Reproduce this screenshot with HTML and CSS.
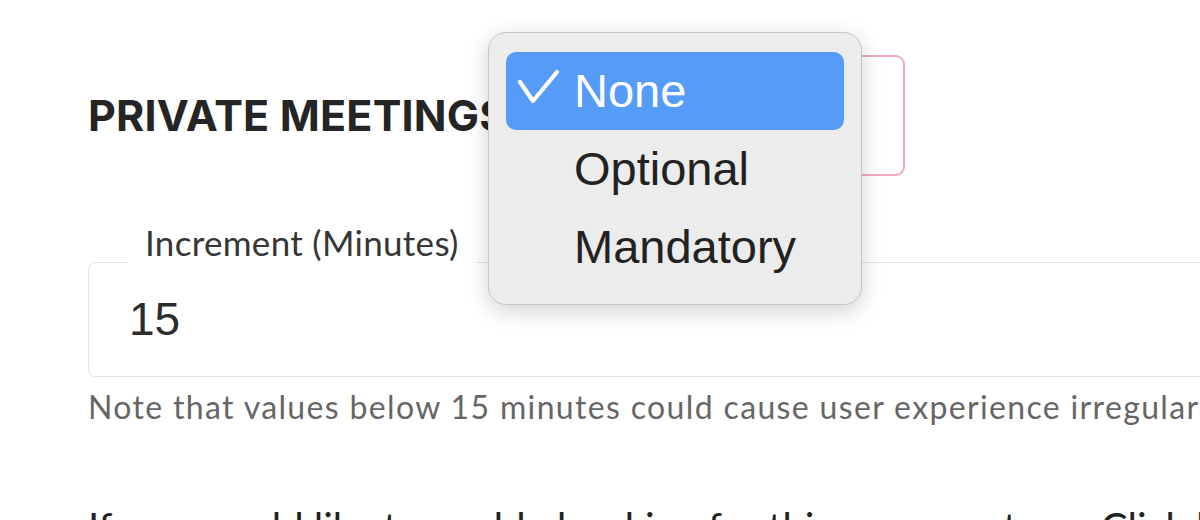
FILE: index.html
```html
<!DOCTYPE html>
<html lang="en">
<head>
<meta charset="utf-8">
<title>Private Meetings</title>
<link rel="stylesheet" href="styles.css">
</head>
<body>
<main class="page">
  <div class="head">
    <h2 class="heading">PRIVATE MEETINGS</h2>
    <div class="select-box"></div>
  </div>

  <div class="field">
    <div class="field-label">Increment (Minutes)</div>
    <div class="field-value">15</div>
  </div>
  <p class="note">Note that values below 15 minutes could cause user experience irregularities.</p>

  <p class="lead">If you would like to enable booking for this resource type, Click here to continue</p>

  <ul class="menu" role="listbox">
    <li class="option selected" role="option">
      <svg class="check" viewBox="0 0 42 36" width="42" height="36" aria-hidden="true"><polyline points="3,13 16,32 40,3" fill="none" stroke="#fff" stroke-width="4.2" stroke-linecap="round" stroke-linejoin="round"/></svg>
      None
    </li>
    <li class="option" role="option">Optional</li>
    <li class="option" role="option">Mandatory</li>
  </ul>
</main>
</body>
</html>
```
FILE: styles.css
```css
html, body {
  margin: 0;
  padding: 0;
  background: #ffffff;
  overflow: hidden;
}

.page {
  width: 1200px;
  height: 520px;
  padding-left: 88px;
  box-sizing: border-box;
  overflow: hidden;
  font-family: Lato, "Open Sans", sans-serif;
}

.head {
  display: flex;
  align-items: center;
  width: 817px;
  margin-top: 55px;
}

.heading {
  margin: 0;
  font-family: Inter, "DejaVu Sans", sans-serif;
  font-weight: 700;
  font-size: 43px;
  line-height: 1.21;
  letter-spacing: 0.2px;
  color: #252525;
  white-space: nowrap;
}

.select-box {
  flex: 1;
  height: 121px;
  margin-left: 16px;
  box-sizing: border-box;
  border: 2px solid #f1a9c1;
  border-radius: 9px;
}

.field {
  margin-top: 86px;
  margin-right: -200px;
  height: 115px;
  box-sizing: border-box;
  border: 1.5px solid #e2e2e2;
  border-radius: 8px;
  padding-left: 40px;
}

.field-label {
  width: fit-content;
  margin-top: -38px;
  margin-left: -2px;
  padding: 0 18px 3px 18px;
  height: 35px;
  background: #ffffff;
  font-size: 35px;
  line-height: 35px;
  letter-spacing: 0.3px;
  color: #363636;
  white-space: nowrap;
}

.field-value {
  font-family: "Liberation Sans", Arial, sans-serif;
  font-size: 46px;
  line-height: 112px;
  color: #2c2c2c;
}

.note {
  margin: 10px 0 0 0;
  font-size: 32px;
  line-height: 40px;
  letter-spacing: 1.35px;
  color: #666666;
  white-space: nowrap;
}

.lead {
  margin: 76px 0 0 0;
  font-size: 40px;
  line-height: 48px;
  color: #222222;
  white-space: nowrap;
}

.menu {
  position: absolute;
  left: 488px;
  top: 32px;
  width: 374px;
  height: 273px;
  box-sizing: border-box;
  margin: 0;
  padding: 19px 17px;
  list-style: none;
  background: #ececec;
  border: 1px solid #c5c5c5;
  border-radius: 18px;
  box-shadow: 0 6px 22px rgba(0, 0, 0, 0.18);
}

.option {
  position: relative;
  height: 78px;
  padding-left: 68px;
  font-family: "Liberation Sans", Arial, sans-serif;
  font-size: 47px;
  line-height: 78px;
  color: #222222;
  border-radius: 10px;
}

.option.selected {
  background: #559bf7;
  color: #ffffff;
}

.check {
  position: absolute;
  left: 11px;
  top: 17px;
}
```
